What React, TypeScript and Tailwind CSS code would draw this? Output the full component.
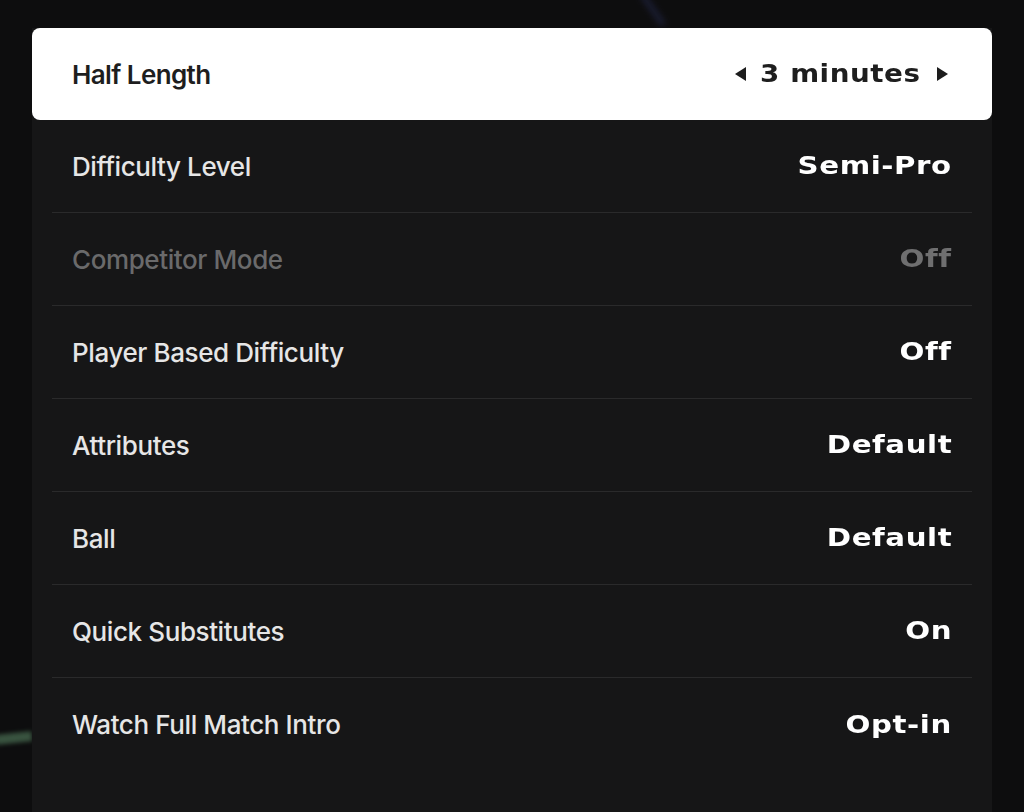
import React from "react";

type Setting = {
  label: string;
  value: string;
  disabled?: boolean;
};

const settings: Setting[] = [
  { label: "Difficulty Level", value: "Semi-Pro" },
  { label: "Competitor Mode", value: "Off", disabled: true },
  { label: "Player Based Difficulty", value: "Off" },
  { label: "Attributes", value: "Default" },
  { label: "Ball", value: "Default" },
  { label: "Quick Substitutes", value: "On" },
  { label: "Watch Full Match Intro", value: "Opt-in" },
];

const labelFont = "font-['Inter',_'Noto_Sans',_sans-serif]";
const valueFont = "font-['DejaVu_Sans',_'Noto_Sans',_sans-serif]";

const Arrow = ({ dir }: { dir: "left" | "right" }) => (
  <svg width="15" height="16" viewBox="0 0 15 16" className="shrink-0">
    {dir === "left" ? (
      <polygon points="13,1 13,15 2,8" fill="#1c1c1c" />
    ) : (
      <polygon points="2,1 2,15 13,8" fill="#1c1c1c" />
    )}
  </svg>
);

const SettingRow = ({ setting, last }: { setting: Setting; last: boolean }) => (
  <div
    className={`flex h-[93px] items-center justify-between px-5 ${
      last ? "" : "border-b border-[#2a2a2b]"
    }`}
  >
    <span
      className={`${labelFont} text-[26px] font-medium tracking-[-0.4px] ${
        setting.disabled ? "text-[#6a6a6b]" : "text-[#e6e6e6]"
      }`}
    >
      {setting.label}
    </span>
    {/* the game's value font is extra wide, so stretch it a bit */}
    <span
      className={`${valueFont} inline-block origin-right scale-x-[1.17] text-[25px] font-bold tracking-[0.5px] ${
        setting.disabled ? "text-[#6f6f70]" : "text-white"
      }`}
    >
      {setting.value}
    </span>
  </div>
);

export default function App() {
  return (
    <div className="relative h-[812px] w-full overflow-hidden bg-[#0d0d0e]">
      {/* faint light streaks from the game background */}
      <div className="absolute -left-1 top-[733px] h-[10px] w-[36px] -rotate-6 bg-[#44654c] opacity-80 blur-[2px]" />
      <div className="absolute left-[650px] -top-2 h-[36px] w-[6px] -rotate-[35deg] bg-[#1a1d33] blur-[3px]" />

      <div className="relative mx-[32px] mt-[28px] flex h-[784px] flex-col bg-[#161617]">
        <div className="flex h-[92px] items-center justify-between rounded-lg bg-white pl-10 pr-[42px]">
          <span className={`${labelFont} text-[26px] font-semibold tracking-[-0.6px] text-[#1e1e1e]`}>
            Half Length
          </span>
          <div className="flex items-center">
            <Arrow dir="left" />
            <span
              className={`${valueFont} ml-5 mr-[22px] inline-block scale-x-[1.11] text-[25px] font-bold tracking-[0.5px] text-[#1e1e1e]`}
            >
              3 minutes
            </span>
            <Arrow dir="right" />
          </div>
        </div>

        <div className="mx-5 flex flex-col">
          {settings.map((s, i) => (
            <SettingRow key={s.label} setting={s} last={i === settings.length - 1} />
          ))}
        </div>
      </div>
    </div>
  );
}
